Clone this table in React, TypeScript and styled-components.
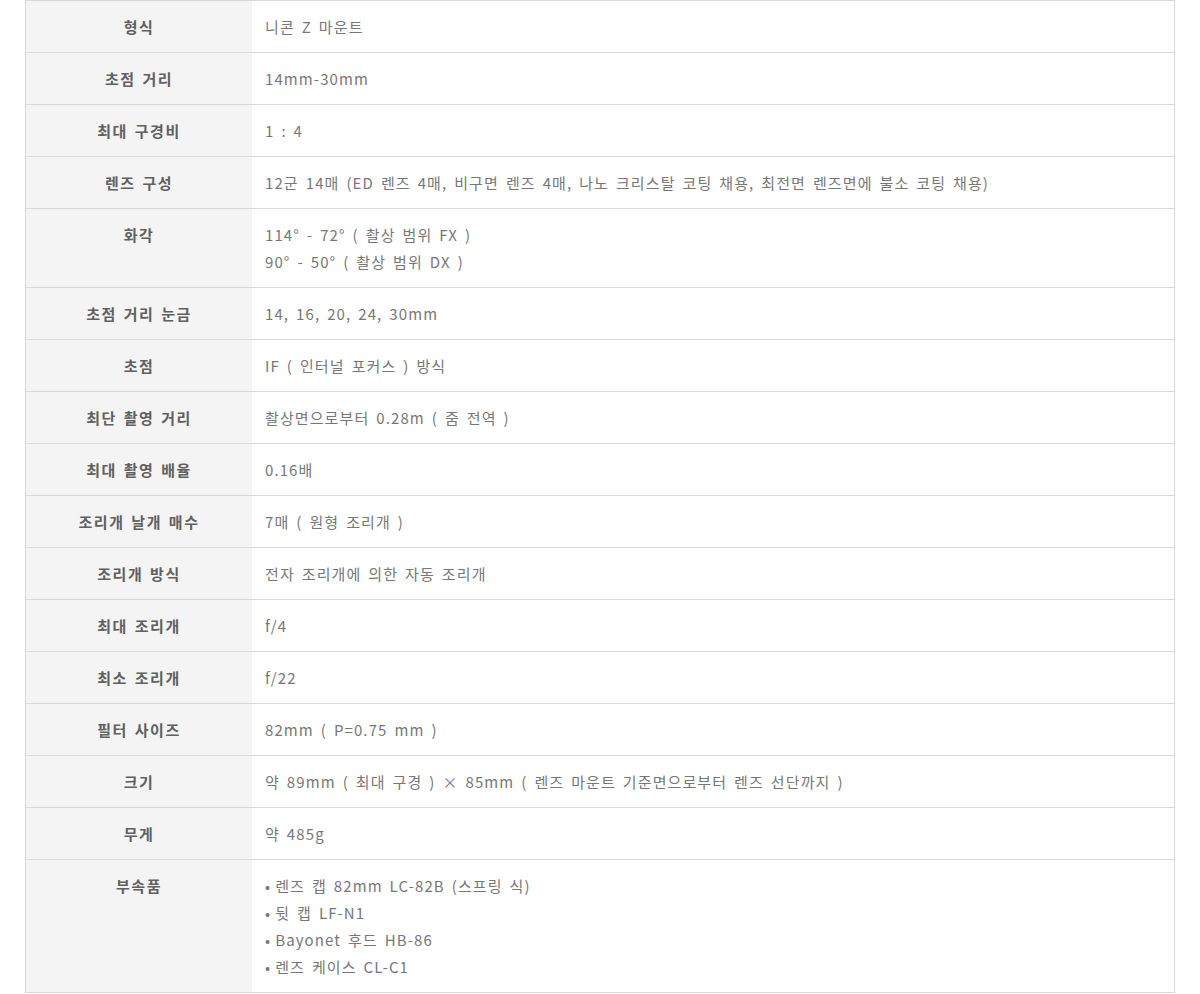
import { JSX } from 'react'
import styled, { createGlobalStyle } from 'styled-components'

const GlobalStyle = createGlobalStyle`
	body {
		margin: 0;
		background: #fff;
		font-family: 'Noto Sans CJK KR', 'Noto Sans', sans-serif;
	}
`

const Page = styled.div`
	padding: 0 25px;
`
const Table = styled.div`
	width: 1150px;
	box-sizing: border-box;
	border: 1px solid #d9d9d9;
	border-bottom-width: 0;
	display: grid;
	grid-template-columns: 226px 1fr;
`
const Label = styled.div`
	background-color: #f4f4f4;
	color: #606060;
	font-weight: 700;
	font-size: 15px;
	line-height: 27px;
	padding: 12px 10px;
	text-align: center;
	border-bottom: 1px solid #d9d9d9;
	letter-spacing: 1.5px;
	word-spacing: 2px;
`
const Value = styled.div`
	color: #777;
	font-size: 15px;
	line-height: 27px;
	padding: 12px 13px;
	border-bottom: 1px solid #d9d9d9;
	letter-spacing: 1.1px;
	word-spacing: 2.5px;
`
const Line = styled.div``
const Bullets = styled.ul`
	margin: 0;
	padding: 0;
	list-style: none;
`
const Bullet = styled.li`
	&::before {
		content: '•';
		margin-right: 4px;
	}
`

type Spec = { name: string; lines: string[]; bullets?: boolean }

const specs: Spec[] = [
	{ name: '형식', lines: ['니콘 Z 마운트'] },
	{ name: '초점 거리', lines: ['14mm-30mm'] },
	{ name: '최대 구경비', lines: ['1 : 4'] },
	{
		name: '렌즈 구성',
		lines: [
			'12군 14매 (ED 렌즈 4매, 비구면 렌즈 4매, 나노 크리스탈 코팅 채용, 최전면 렌즈면에 불소 코팅 채용)',
		],
	},
	{
		name: '화각',
		lines: ['114° - 72° ( 촬상 범위 FX )', '90° - 50° ( 촬상 범위 DX )'],
	},
	{ name: '초점 거리 눈금', lines: ['14, 16, 20, 24, 30mm'] },
	{ name: '초점', lines: ['IF ( 인터널 포커스 ) 방식'] },
	{ name: '최단 촬영 거리', lines: ['촬상면으로부터 0.28m ( 줌 전역 )'] },
	{ name: '최대 촬영 배율', lines: ['0.16배'] },
	{ name: '조리개 날개 매수', lines: ['7매 ( 원형 조리개 )'] },
	{ name: '조리개 방식', lines: ['전자 조리개에 의한 자동 조리개'] },
	{ name: '최대 조리개', lines: ['f/4'] },
	{ name: '최소 조리개', lines: ['f/22'] },
	{ name: '필터 사이즈', lines: ['82mm ( P=0.75 mm )'] },
	{
		name: '크기',
		lines: ['약 89mm ( 최대 구경 ) × 85mm ( 렌즈 마운트 기준면으로부터 렌즈 선단까지 )'],
	},
	{ name: '무게', lines: ['약 485g'] },
	{
		name: '부속품',
		bullets: true,
		lines: [
			'렌즈 캡 82mm LC-82B (스프링 식)',
			'뒷 캡 LF-N1',
			'Bayonet 후드 HB-86',
			'렌즈 케이스 CL-C1',
		],
	},
]

export default function App(): JSX.Element {
	return (
		<>
			<GlobalStyle />
			<Page>
				<Table>
					{specs.map(spec => [
						<Label key={spec.name + '-l'}>{spec.name}</Label>,
						<Value key={spec.name + '-v'}>
							{spec.bullets ? (
								<Bullets>
									{spec.lines.map(l => (
										<Bullet key={l}>{l}</Bullet>
									))}
								</Bullets>
							) : (
								spec.lines.map(l => <Line key={l}>{l}</Line>)
							)}
						</Value>,
					])}
				</Table>
			</Page>
		</>
	)
}
